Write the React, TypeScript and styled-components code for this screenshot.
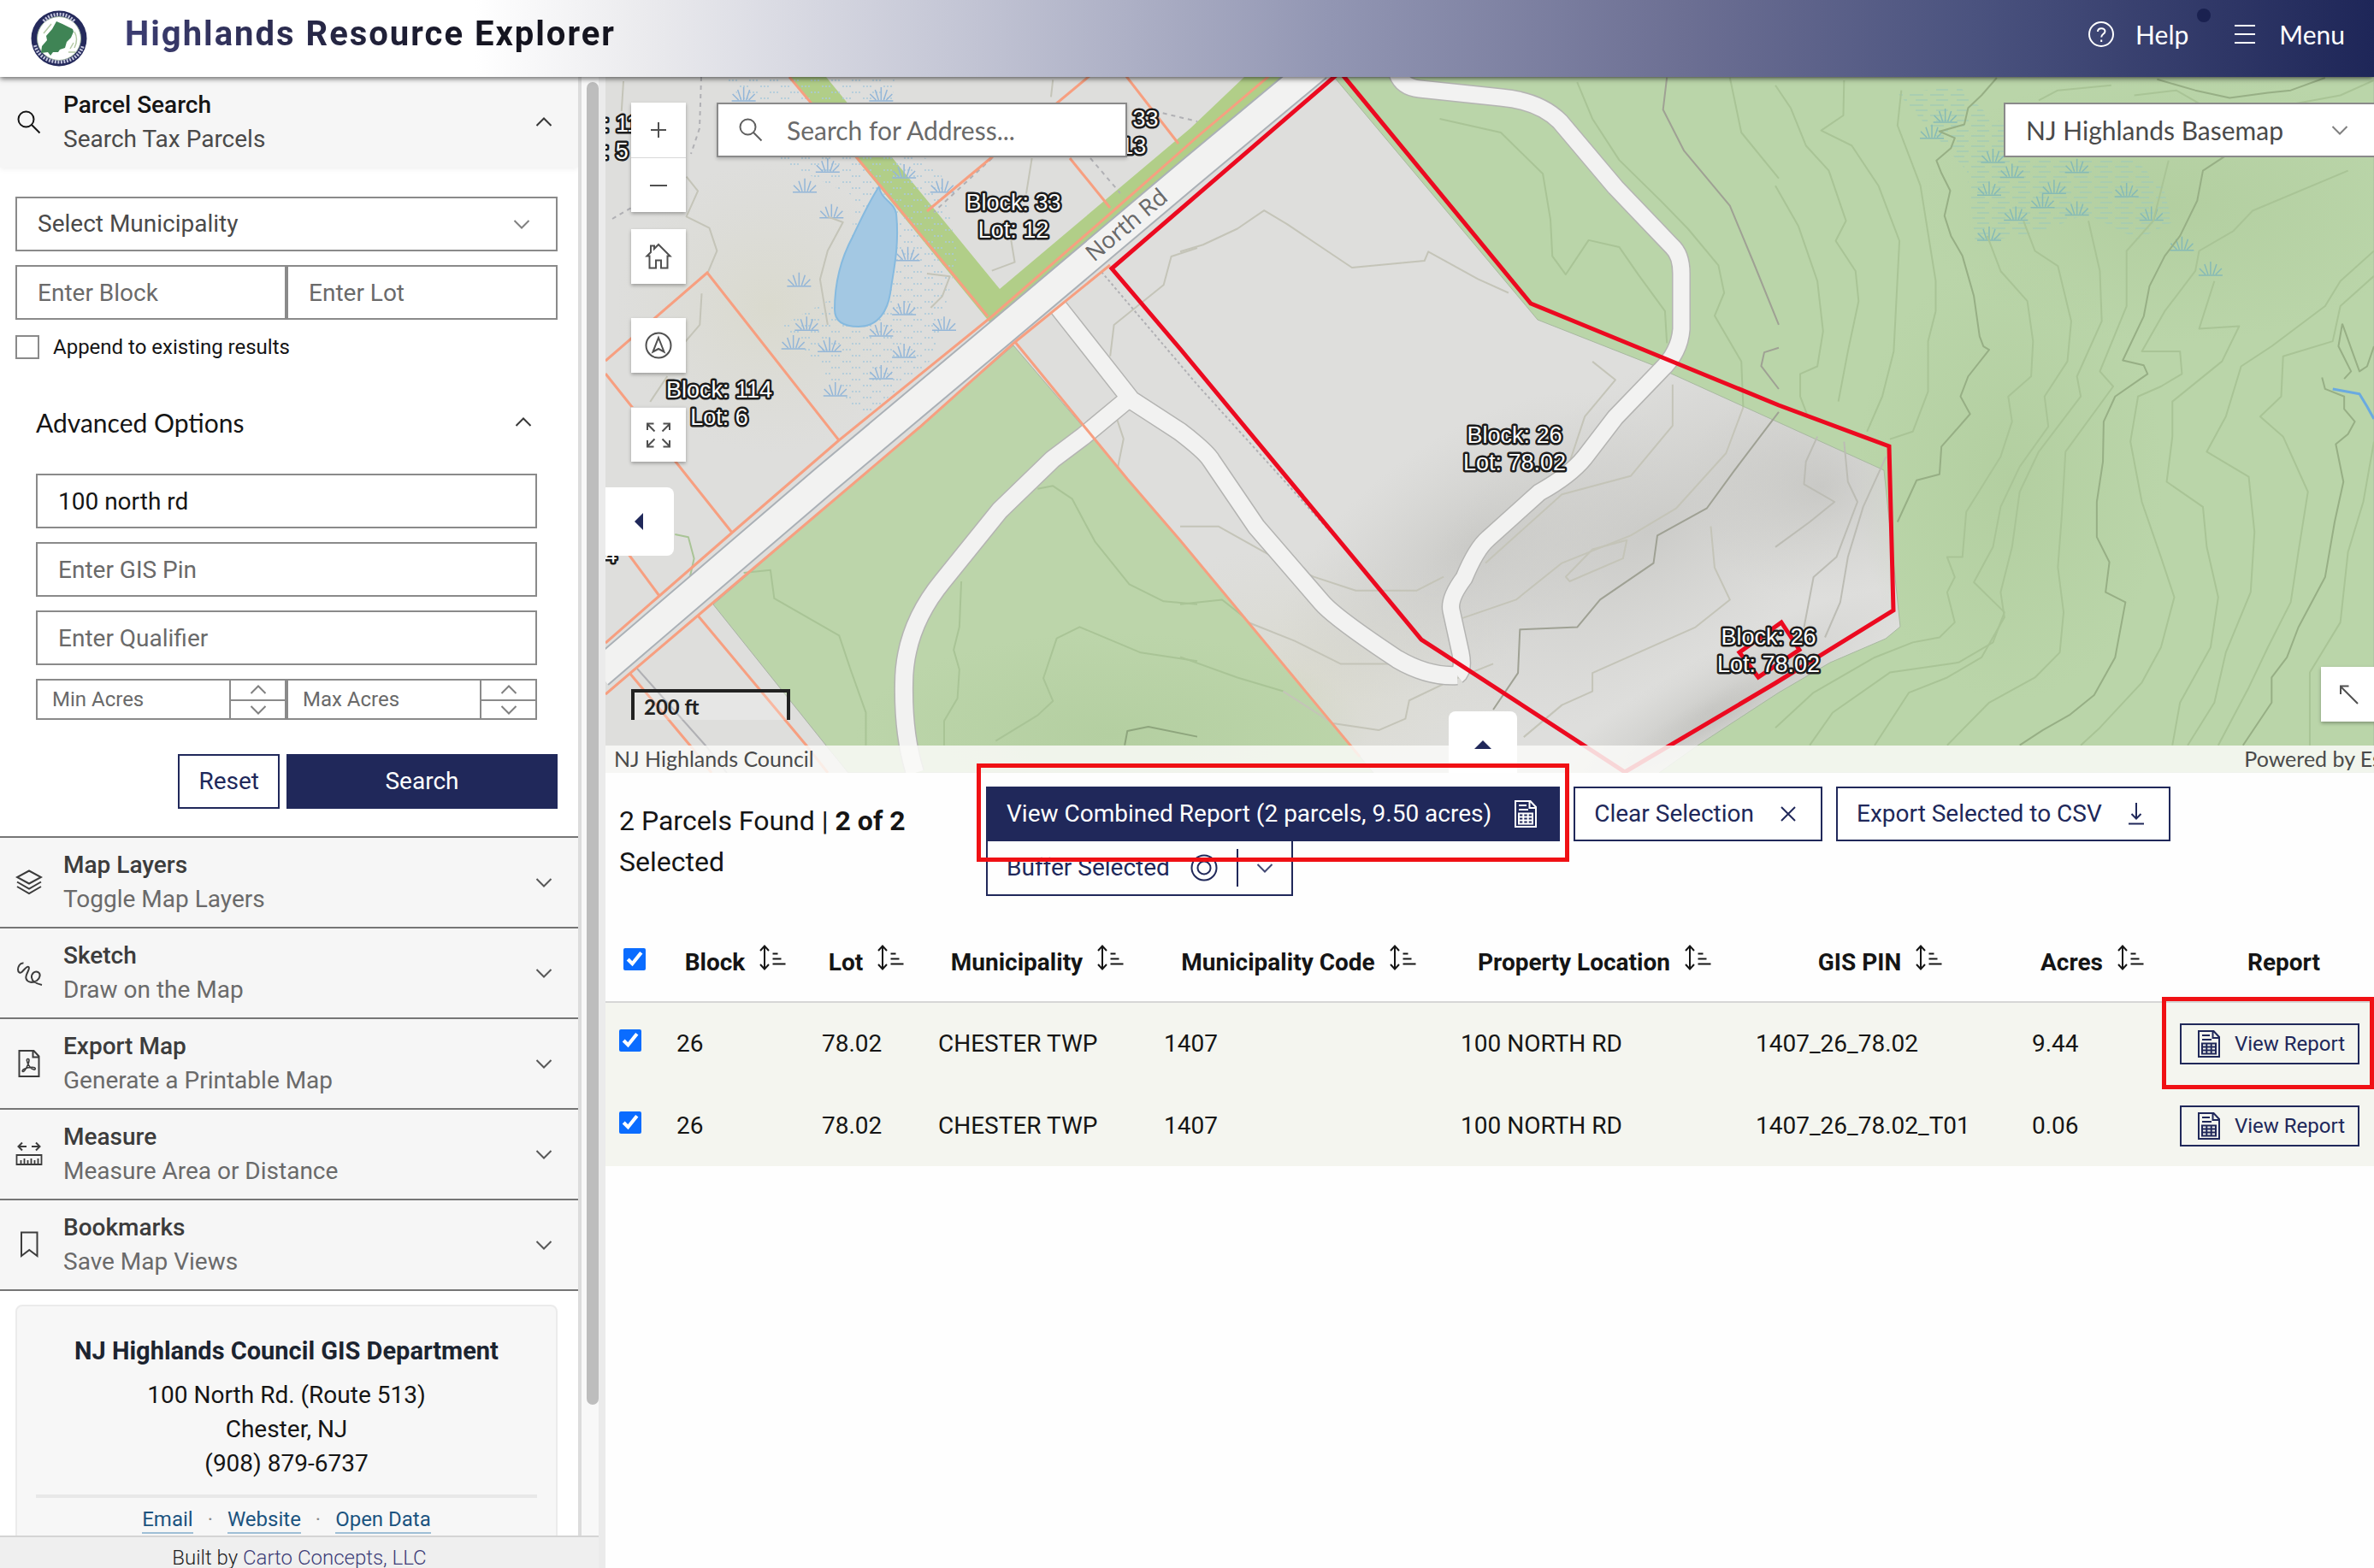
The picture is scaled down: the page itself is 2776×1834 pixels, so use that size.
import React from "react";
import styled, { createGlobalStyle, css } from "styled-components";

const navy = "#20285a";
const line = "#8a8a8a";
const sans = `Roboto, "Liberation Sans", sans-serif`;
const human = `Lato, "Open Sans", sans-serif`;

const Global = createGlobalStyle`
  *, *::before, *::after { box-sizing: border-box; }
  html, body { margin: 0; padding: 0; }
  body { font-family: ${sans}; font-size: 28px; line-height: 40px; color: #151515; background: #fff; }
  button, input, select { font: inherit; color: inherit; margin: 0; }
  button { cursor: pointer; }
`;

const Page = styled.div`
  display: flex;
  flex-direction: column;
  height: 100vh;
  overflow: hidden;
`;

/* ---------- header ---------- */

const Header = styled.header`
  position: relative;
  z-index: 3;
  flex: none;
  display: flex;
  align-items: center;
  justify-content: space-between;
  height: 90px;
  padding: 0 34px 0 36px;
  background: linear-gradient(90deg, #fff 20%, #ebebee 27%, #c5c7d6 40%, #9296b3 56%, #6c6f93 71%, #4b537f 83%, #1e2658 100%);
  box-shadow: 0 2px 6px rgba(0, 0, 0, 0.6);
`;

const Brand = styled.div`
  display: flex;
  align-items: center;
  gap: 44px;
`;

const Title = styled.h1`
  margin: 0;
  padding-bottom: 10px;
  font-size: 40px;
  line-height: 48px;
  font-weight: 700;
  letter-spacing: 2px;
  background: linear-gradient(90deg, #3c3d72, #14141f 75%);
  background-clip: text;
  color: transparent;
`;

const HeaderNav = styled.nav`
  display: flex;
  align-items: center;
  gap: 50px;
  padding-bottom: 10px;
`;

const NavButton = styled.button`
  position: relative;
  display: flex;
  align-items: center;
  gap: 24px;
  padding: 0;
  border: 0;
  background: none;
  color: #fff;
  font-family: ${human};
  font-size: 30px;
`;

const Dot = styled.span`
  position: absolute;
  top: -10px;
  right: -26px;
  width: 16px;
  height: 16px;
  border-radius: 50%;
  background: #1a2150;
`;

/* ---------- frame ---------- */

const Body = styled.div`
  display: flex;
  flex: 1;
  min-height: 0;
`;

const Sidebar = styled.aside`
  flex: none;
  display: flex;
  flex-direction: column;
  width: 708px;
  background: #ececec;
  border-right: 8px solid #ebebeb;
`;

const Scroller = styled.div`
  flex: 1;
  display: flex;
  min-height: 0;
  overflow: hidden;
`;

const ScrollBody = styled.div`
  flex: 1;
  min-width: 0;
  overflow: hidden;
  background: #fff;
  border-right: 4px solid #dcdcdc;
`;

const ScrollTrack = styled.div`
  width: 20px;
  padding: 6px 0 0 6px;
  background: #f8f8f8;
`;

const ScrollThumb = styled.div`
  height: 91%;
  border-radius: 7px;
  background: #bdbdbd;
`;

const Main = styled.main`
  flex: 1;
  min-width: 0;
  display: flex;
  flex-direction: column;
  overflow: hidden;
`;

/* ---------- sidebar ---------- */

const SectionButton = styled.button<{ $open?: boolean }>`
  display: flex;
  align-items: center;
  gap: 24px;
  width: 100%;
  height: 106px;
  padding: 0 30px 0 18px;
  border: 0;
  border-bottom: ${(p) => (p.$open ? "0" : "2px solid #767676")};
  background: #f6f6f6;
  text-align: left;
  color: ${(p) => (p.$open ? "#151515" : "#3c3c3c")};
  ${(p) => p.$open && css`box-shadow: 0 2px 6px rgba(0, 0, 0, 0.06);`}
`;

const SectionText = styled.span`
  flex: 1;
  display: flex;
  flex-direction: column;
`;

const SectionTitle = styled.span`
  font-weight: 500;
`;

const SectionNote = styled.span<{ $open?: boolean }>`
  color: ${(p) => (p.$open ? "#4a4a4a" : "#6a6a6a")};
`;

const SearchForm = styled.form`
  display: flex;
  flex-direction: column;
  gap: 16px;
  padding: 34px 24px 32px 18px;
  border-bottom: 2px solid #767676;
`;

const boxed = css`
  width: 100%;
  min-width: 0;
  height: 64px;
  border: 2px solid ${line};
  border-radius: 0;
  background: #fff;
  padding: 0 24px;
  outline: none;
  &::placeholder {
    color: #6a6a6a;
    opacity: 1;
  }
`;

const TextBox = styled.input`
  ${boxed}
`;

const SelectWrap = styled.span`
  position: relative;
  display: block;
`;

const SelectBox = styled.select`
  ${boxed}
  appearance: none;
  color: #4a4a4a;
`;

const SelectMark = styled.span`
  position: absolute;
  top: 0;
  bottom: 0;
  right: 32px;
  display: flex;
  align-items: center;
  pointer-events: none;
  color: #6a6a6a;
`;

const Pair = styled.div`
  display: grid;
  grid-template-columns: 1fr 1fr;
`;

const AppendLabel = styled.label`
  display: flex;
  align-items: center;
  gap: 16px;
  padding-top: 2px;
  line-height: 28px;
  font-size: 24px;
`;

const AppendBox = styled.input`
  appearance: none;
  width: 28px;
  height: 28px;
  border: 2px solid ${line};
  background: #fff;
`;

const AdvancedToggle = styled.button`
  display: flex;
  align-items: center;
  justify-content: space-between;
  height: 48px;
  margin: 34px 0 20px;
  padding: 0 6px 0 0;
  border: 0;
  background: none;
  font-family: ${human};
  font-size: 30px;
`;

const Advanced = styled.div`
  display: flex;
  flex-direction: column;
  gap: 16px;
  padding: 0 24px;
`;

const Stepper = styled.div`
  display: grid;
  grid-template-columns: 1fr 67px;
  height: 48px;
`;

const StepInput = styled.input`
  ${boxed}
  height: 48px;
  padding: 0 17px;
  font-size: 24px;
  border-right: 0;
  appearance: textfield;
  &::-webkit-inner-spin-button {
    display: none;
  }
`;

const StepButtons = styled.div`
  display: grid;
  grid-template-rows: 1fr 1fr;
  border: 2px solid ${line};
`;

const StepButton = styled.button`
  display: flex;
  align-items: center;
  justify-content: center;
  padding: 0;
  border: 0;
  background: #fff;
  color: #6a6a6a;
  & + & {
    border-top: 2px solid ${line};
  }
`;

const FormActions = styled.div`
  display: flex;
  justify-content: flex-end;
  gap: 8px;
  padding-top: 24px;
`;

const Button = styled.button<{ $solid?: boolean }>`
  display: flex;
  align-items: center;
  justify-content: center;
  gap: 24px;
  height: 64px;
  padding: 0 22px;
  border: 2px solid ${navy};
  background: ${(p) => (p.$solid ? navy : "#fff")};
  color: ${(p) => (p.$solid ? "#fff" : navy)};
  white-space: nowrap;
`;

const SubmitButton = styled(Button)`
  flex: 0 0 50%;
`;

const ContactCard = styled.section`
  margin: 16px 24px 0 18px;
  padding: 32px 22px 60px;
  border: 2px solid #ebebeb;
  border-radius: 8px;
  background: #f7f7f7;
  text-align: center;
`;

const ContactTitle = styled.h2`
  margin: 0 0 12px;
  font-size: 29px;
  line-height: 40px;
  font-weight: 700;
  color: #1c2430;
`;

const Address = styled.address`
  font-style: normal;
  padding-bottom: 16px;
  border-bottom: 4px solid #e8e8e8;
`;

const ContactLinks = styled.div`
  display: flex;
  justify-content: center;
  gap: 17px;
  padding-top: 10px;
  font-size: 24px;
  line-height: 30px;
  color: #8a8a8a;
`;

const ContactLink = styled.a`
  color: #1c5480;
  text-decoration: none;
  border-bottom: 2px solid #9fbfd6;
`;

const Credit = styled.footer`
  flex: none;
  height: 38px;
  padding-top: 8px;
  border-top: 2px solid #d4d4d4;
  background: #efefef;
  text-align: center;
  font-size: 24px;
  line-height: 32px;
  font-weight: 300;
  color: #222;
  a {
    color: #3d3d78;
    text-decoration: none;
  }
`;

/* ---------- map ---------- */

const MapPane = styled.section`
  position: relative;
  flex: none;
  height: calc(50vh - 103px);
  overflow: hidden;
  background: #dededc;
`;

const MapDrawing = styled.svg`
  display: block;
  width: 100%;
  height: 100%;
`;

const ToolColumn = styled.div`
  position: absolute;
  top: 30px;
  left: 30px;
  display: flex;
  flex-direction: column;
  gap: 40px;
`;

const ToolGroup = styled.div`
  display: flex;
  flex-direction: column;
  gap: 20px;
`;

const ToolStack = styled.div`
  display: flex;
  flex-direction: column;
  box-shadow: 0 2px 4px rgba(0, 0, 0, 0.3);
`;

const ToolButton = styled.button`
  display: flex;
  align-items: center;
  justify-content: center;
  width: 64px;
  height: 64px;
  padding: 0;
  border: 0;
  background: #fff;
  color: #505050;
  box-shadow: 0 2px 4px rgba(0, 0, 0, 0.3);
  ${ToolStack} & {
    box-shadow: none;
  }
  & + & {
    border-top: 1px solid #d8d8d8;
  }
`;

const AddressSearch = styled.label`
  position: absolute;
  top: 30px;
  left: 130px;
  display: flex;
  align-items: center;
  gap: 26px;
  width: 480px;
  height: 64px;
  padding: 0 20px 0 22px;
  border: 2px solid ${line};
  background: #fff;
  color: #5f5f5f;
  box-shadow: 0 2px 4px rgba(0, 0, 0, 0.2);
`;

const AddressInput = styled.input`
  flex: 1;
  min-width: 0;
  padding: 0;
  border: 0;
  outline: none;
  background: none;
  font-family: ${human};
  font-size: 30px;
  &::placeholder {
    color: #6a6a6a;
    opacity: 1;
  }
`;

const BasemapPicker = styled.div`
  position: absolute;
  top: 30px;
  right: -30px;
  width: 463px;
`;

const BasemapSelect = styled(SelectBox)`
  font-family: ${human};
  font-size: 30px;
`;

const BasemapMark = styled(SelectMark)`
  right: 60px;
`;

const CornerButton = styled(ToolButton)`
  position: absolute;
  right: -2px;
  bottom: 60px;
`;

const ScaleBar = styled.div`
  position: absolute;
  left: 30px;
  bottom: 62px;
  width: 186px;
  height: 36px;
  padding-left: 11px;
  border: 4px solid #222;
  border-bottom: 0;
  background: rgba(255, 255, 255, 0.25);
  font-family: ${human};
  font-size: 24px;
  line-height: 34px;
  font-weight: 700;
  color: #222;
`;

const Attribution = styled.div`
  position: absolute;
  left: 0;
  right: 0;
  bottom: 0;
  display: flex;
  justify-content: space-between;
  height: 32px;
  padding: 0 0 0 10px;
  background: rgba(250, 250, 248, 0.85);
  font-family: ${human};
  font-size: 25px;
  line-height: 30px;
  color: #4a4a4a;
  white-space: nowrap;
`;

const Powered = styled.span`
  margin-right: -24px;
`;

const SideFold = styled.button`
  position: absolute;
  top: 480px;
  left: 0;
  display: flex;
  align-items: center;
  justify-content: center;
  width: 80px;
  height: 80px;
  padding: 0 2px 0 0;
  border: 0;
  border-radius: 0 8px 8px 0;
  background: #fff;
`;

const BottomFold = styled(SideFold)`
  top: auto;
  bottom: 0;
  left: 986px;
  height: 72px;
  padding: 6px 0 0;
  border-radius: 8px 8px 0 0;
`;

/* ---------- results ---------- */

const Results = styled.section`
  flex: 1;
  min-height: 0;
  background: #fefefe;
`;

const ResultsBar = styled.div`
  display: flex;
  align-items: flex-start;
  height: 174px;
  padding: 16px 16px 0;
`;

const Count = styled.p`
  flex: none;
  width: 400px;
  margin: 16px 29px 0 0;
  font-size: 32px;
  line-height: 48px;
  strong {
    font-weight: 700;
  }
`;

const Actions = styled.div`
  display: flex;
  flex-wrap: wrap;
  column-gap: 16px;
`;

const Marked = styled.div`
  position: relative;
  display: flex;
  width: max-content;
`;

const Mark = styled.span<{ $kind: "wide" | "cell" }>`
  position: absolute;
  z-index: 1;
  inset: ${(p) => (p.$kind === "wide" ? "-27px -11px -24px" : "-31px -17px -29px -21px")};
  border: 5px solid #f01014;
  pointer-events: none;
`;

const SplitButton = styled.div`
  display: flex;
  align-items: center;
  height: 64px;
  border: 2px solid ${navy};
  border-top-width: 0;
  color: ${navy};
`;

const SplitMain = styled.button`
  display: flex;
  align-items: center;
  gap: 24px;
  height: 44px;
  padding: 0 22px;
  border: 0;
  border-right: 2px solid ${navy};
  background: none;
`;

const SplitMore = styled.button`
  display: flex;
  align-items: center;
  justify-content: center;
  width: 62px;
  height: 44px;
  padding: 0;
  border: 0;
  background: none;
`;

const Table = styled.table`
  width: calc(100% + 32px);
  min-width: 2100px;
  table-layout: fixed;
  border-collapse: collapse;
`;

const Column = styled.col<{ $w?: number }>`
  width: ${(p) => (p.$w ? `${p.$w}px` : "auto")};
`;

const HeadCell = styled.th`
  height: 94px;
  padding: 3px 16px 0;
  border-bottom: 2px solid #d6d6d6;
  font-weight: 700;
  white-space: nowrap;
  color: #151515;
`;

const HeadInner = styled.span`
  display: inline-flex;
  align-items: center;
  gap: 16px;
`;

const SortButton = styled.button`
  display: inline-flex;
  padding: 0 0 12px;
  border: 0;
  background: none;
`;

const Row = styled.tr`
  background: #f4f5ef;
`;

const Cell = styled.td`
  height: 96px;
  padding: 1px 16px 0;
  white-space: nowrap;
`;

const TickBox = styled.input`
  display: block;
  width: 26px;
  height: 26px;
  margin: 0 auto 8px;
  accent-color: #0a6cff;
  ${Cell} & {
    margin: 0 0 8px;
  }
`;

const ReportButton = styled(Button)`
  height: 48px;
  padding: 0 15px 0 16px;
  gap: 14px;
  background: transparent;
  font-size: 24px;
`;

/* ---------- icons ---------- */

type IconProps = { children: React.ReactNode };
const Icon = ({ children }: IconProps) => (
  <svg width="32" height="32" viewBox="0 0 32 32" fill="none" stroke="currentColor" strokeWidth="2" aria-hidden="true">
    {children}
  </svg>
);

const Chevron = ({ up }: { up?: boolean }) => (
  <svg width="20" height="12" viewBox="0 0 20 12" fill="none" stroke="currentColor" strokeWidth="2" strokeOpacity="0.85" aria-hidden="true">
    <path d={up ? "M1.500 10 10 1.500 18.500 10" : "M1.500 2 10 10.500 18.500 2"} />
  </svg>
);

const SearchIcon = () => (
  <Icon>
    <circle cx="12.500" cy="12.500" r="9" />
    <path d="m18.800 18.800 9.700 9.700" />
  </Icon>
);

const LayersIcon = () => (
  <Icon>
    <path d="M16 2.500 30 10l-14 7.500L2 10z" />
    <path d="m2 15.500 14 8 14-8M2 21l14 8 14-8" />
  </Icon>
);

const SketchIcon = () => (
  <Icon>
    <path d="M9.500 4.500C5 4 3 9 3 12c0 3 2.500 5 5 2.500 3-3 5.500-7 7.500-5.500 2.500 2-4.500 9-3 13.500 1.500 5 8 5.500 12.500 2.500 4-3 5-8 1.500-10-4-2-8 2-7.500 6.500C19.500 26 24 28.500 31 30" />
  </Icon>
);

const PdfIcon = () => (
  <Icon>
    <path d="M4.500 1h17l6 6.500V31h-23zM20.500 1.500v7h7" />
    <path d="M14.500 10.500c2-.500 2 2.500 0 7-1.500 3.500-3.500 7.500-5.500 8-1.500 0-1-2 1.500-3.200 2.500-1.300 6-2 9-2 2.500 0 4 .700 3.800 2-.500 1.500-3.800.700-6.300-2.300-2-2.500-3.500-6-3.700-8 0-.800.500-1.300 1.200-1.500z" strokeWidth="1.600" />
  </Icon>
);

const MeasureIcon = () => (
  <Icon>
    <path d="M4 7h9M19 7h9M8 2.500 3.500 7 8 11.500M24 2.500 28.500 7 24 11.500" />
    <path d="M1.500 17h29v11h-29zM6.500 28v-5M10.500 28v-7M14.500 28v-5M18.500 28v-7M22.500 28v-5M26.500 28v-7" strokeWidth="1.800" />
  </Icon>
);

const BookmarkIcon = () => (
  <Icon>
    <path d="M7 1.500h18.500v27.500L16.250 22 7 29z" />
  </Icon>
);

const SheetIcon = () => (
  <Icon>
    <path d="M4 1h17.500L28 8v23H4zM20.500 1.500V9H28M8 6h9M8 11h11" />
    <path d="M8 15.500h16v12H8zM8 19.500h16M8 23.500h16M13.300 15.500v12M18.700 15.500v12" />
  </Icon>
);

const SortIcon = () => (
  <Icon>
    <path d="M7 3v26M2 8l5-5.500L12 8M2 24l5 5.500L12 24M16.500 11.500h6M16.500 17.500h10M16.500 23.500h15" />
  </Icon>
);

const CloseIcon = () => (
  <Icon>
    <path d="m8 8 16 16M24 8 8 24" />
  </Icon>
);

const DownloadIcon = () => (
  <Icon>
    <path d="M16 3v18M10.500 16l5.500 5.500 5.500-5.500M7 27.500h18" />
  </Icon>
);

const BufferIcon = () => (
  <Icon>
    <circle cx="16" cy="16" r="14.500" />
    <circle cx="16" cy="16" r="7.500" />
  </Icon>
);

const HelpIcon = () => (
  <Icon>
    <circle cx="16" cy="16" r="14" />
    <path d="M12 13c0-5 8.500-5 8.500-.500 0 3.500-4.300 3-4.300 7M16.200 22.500v2.500" />
  </Icon>
);

const MenuIcon = () => (
  <Icon>
    <path d="M4 6h24M4 16h24M4 26h24" />
  </Icon>
);

const HomeIcon = () => (
  <Icon>
    <path d="M2.500 15.500 7 11V3.500h4v3.500l5-5 13.500 13.500h-3V29.500H19v-9h-6v9H5.500v-14z" />
  </Icon>
);

const CompassIcon = () => (
  <Icon>
    <circle cx="16" cy="16" r="14.500" />
    <path d="m16 7 6.500 16.500L16 20l-6.500 3.500z" />
  </Icon>
);

const ExpandIcon = () => (
  <Icon>
    <path d="M11.500 11.500 3 3M3 10V2.500h7.500M20.500 11.500 29 3M29 10V2.500h-7.500M11.500 20.500 3 29M3 22v7.500h7.500M20.500 20.500 29 29M29 22v7.500h-7.500" />
  </Icon>
);

const ArrowIcon = () => (
  <Icon>
    <path d="M27 27 7 7M7 16V6.500h9.500" />
  </Icon>
);

const Seal = () => (
  <svg width="66" height="66" viewBox="0 0 66 66" aria-hidden="true">
    <circle cx="33" cy="33" r="32.500" fill="#252a5c" />
    <circle cx="33" cy="33" r="25.500" fill="#fff" stroke="#9fb59f" strokeWidth="1" />
    <path d="M30 13l7 3 12 6 1 3-3 7-5 5-2 7-6 2-2 3-6 0-3 4-3-4-8 1 1-8 6-7-1-5 7-8z" fill="#3f8455" />
    <path d="M15 27l9-11M51 25c4 7 3 13 0 19M44 49h8M46 45l4-7" fill="none" stroke="#b4c9a4" strokeWidth="1.500" />
    <path d="M15 16c9-11 27-11 36 0" fill="none" stroke="#c3c5dc" strokeWidth="4" strokeDasharray="2 1.500" transform="translate(0 -3)" />
    <path d="M5 41c7 26 49 26 56 0" fill="none" stroke="#c3c5dc" strokeWidth="4" strokeDasharray="2 1.500" />
  </svg>
);

/* ---------- map drawing ---------- */

const orange = [
  "M708 752 771 697 856 623 981 515 1160 370 1298 250 1400 160 1485 88",
  "M708 812 816 720 1075 500 1187 400 1298 310",
  "M1187 400 1318 560 1380 632 1590 885",
  "M923 90 1030 218 1155 370",
  "M708 422 827 319 981 515",
  "M708 437 790 540 856 623",
  "M720 628 771 697",
  "M1275 88 1084 247",
  "M1316 88 1378 168",
  "M1251 185 1298 243",
  "M816 720 943 872 968 904",
  "M736 787 807 872 832 904",
];

const parcel = "M1567 84 1790 355 2080 474 2209 522 2214 714 2076 799 1900 903 1662 748 1380 408 1300 314z";

const roads = [
  { w: 20, d: "M1238 360 1323 468 1380 505Q1410 528 1416 538L1469 616 1545 704Q1560 722 1634 771 1670 792 1704 790" },
  { w: 20, d: "M1320 466 1267 510 1231 537 1169 597 1102 680Q1057 735 1057 800 1056 860 1070 904" },
  { w: 19, d: "M1634 86Q1640 102 1660 104L1755 114Q1800 118 1824 142L1889 219 1955 288Q1966 298 1966 320L1966 385Q1964 412 1942 433L1889 488 1853 535Q1836 556 1800 576L1740 630Q1726 642 1712 676 1694 700 1697 714L1708 764Q1712 784 1704 790" },
];

const thinEast = [
  "M0 170 40 215 80 290 140 340 185 440 158 480 210 540 218 600 190 700 165 800",
  "M180 160 178 230 120 260 200 290 270 370 325 480 310 700 280 790 240 860",
  "M330 180 320 250 380 370 420 560 420 620 400 680 400 780 360 860 300 875",
  "M0 370 60 450 110 560 125 660 110 730 65 745 65 790 85 830",
  "M555 470 590 540 660 600 675 680 670 750 610 790 620 840 590 910 500 1020 490 1110 450 1110 470 1150 450 1180 470 1240 430 1270 360 1280 260 1310 100 1380 0 1450",
  "M650 440 680 500 740 530 775 640 765 720 705 790 715 850 640 930 590 1010 570 1090 520 1160 600 1220 570 1280 480 1320 300 1340 150 1420 90 1485",
  "M820 440 850 540 855 640 790 750 800 790 690 900 640 980 620 1090 590 1180 600 1230 540 1310 450 1350 350 1380 260 1485",
  "M1030 320 990 440 920 500 920 610 850 740 885 770 760 900 750 1030 740 1130 755 1220 745 1300 680 1350 560 1400 450 1485",
  "M1500 340 1250 420 1200 460 1110 500 1100 540 1020 620 960 700 1060 700 1065 745 1010 770 950 790 930 880 960 1000 1010 1110 1045 1190 1010 1290 960 1360 850 1450 800 1485",
  "M1150 560 1110 655 1215 650 1170 720 1040 800 1040 870 1025 960 1120 1010 1130 1090 1160 1190 1140 1290 1060 1400 1040 1485",
  "M1568 500 1480 560 1440 610 1300 690 1220 730 1180 830 1130 900 1240 950 1255 1060 1245 1180 1180 1300 1150 1400 1080 1485",
  "M1568 550 1480 610 1460 680 1330 710 1325 790 1270 830 1330 870 1395 980 1370 1100 1350 1200 1290 1290 1240 1370 1160 1485",
  "M1568 880 1540 1000 1500 1100 1480 1240 1400 1340 1400 1485",
  "M690 200 740 180 880 170M940 190 1050 180 1130 215 1300 215 1480 190 1568 160",
];
const thinParcel = [
  "M0 1090 90 1040 155 1000 75 965 80 920 110 870M180 880 190 960 215 1000 160 1110 100 1150 75 1250M290 910 230 1010 190 1110 170 1200 130 1270",
];
const thickEast = [
  "M580 155 540 190 505 215 495 248 430 262 470 275 460 295 422 320 435 345 458 380 443 430 460 470 490 510 520 590 535 670 545 690 560 697 505 750 485 790 510 825 435 890 430 945 370 957 320 1040",
  "M1200 300 1120 340 1105 400 1060 470 1020 510 980 570 965 630 910 718 965 728 975 745 890 790 860 840 858 920 842 1000 842 1070 875 1120 865 1180 917 1200 890 1310 835 1385 770 1425 700 1455 640 1485",
  "M1000 158 1100 180 1190 195 1290 185 1350 180 1440 155",
  "M1485 645 1475 690 1508 740 1490 755 M1485 645 1530 740 1550 730 1568 690 M1432 752 1440 775 1490 790 1490 815 1518 840 1500 865 1468 885 1488 960 1465 1040 1440 1150 1370 1250 1340 1310 1300 1350 1300 1400 1225 1485",
];
const thinMid = [
  "M1290 690 1290 780 1180 890 1000 930 800 1080",
  "M0 400 60 385 150 350 220 310 280 340 450 435 640 420 650 400 780 460 860 490",
  "M1080 640 1140 680 1060 760 1020 860",
  "M1475 740 1430 840 1300 960 1180 1020 1000 1080 880 1160 740 1200",
  "M0 1000 100 1000 250 1070 350 1110 460 1140 620 1140 690 1110",
  "M180 1210 300 1250 420 1300 560 1300",
  "M270 1360 400 1430 520 1445 590 1420 600 1380 700 1340 820 1300",
  "M1390 1000 1400 1090 1440 1160 1350 1220 1080 1320 1080 1360 1000 1390 900 1460",
  "M1010 1110 1080 1050 1170 1030 1160 1070 1020 1120z",
];
const thinMidGreen = [
  "M1040 30 1080 110 1150 200 1260 290 1330 350 1410 430 1425 490 1400 540 1470 640 1475 740",
  "M680 110 840 140 950 230 970 330 975 410 1010 450 1070 375 1150 390 1200 450 1270 530 1275 600",
  "M1440 20 1470 140 1568 240",
  "M0 1285 150 1330 270 1360",
  "M0 1170 110 1160 170 1200",
];
const thickMid = [
  "M1275 20 1265 90 1320 180 1440 300 1500 420 1568 560",
  "M1568 750 1450 880 1380 960 1250 1020 1240 1080 1100 1160 1040 1220 890 1225 885 1320 820 1400",
  "M1568 610 1530 620 1522 650 1568 700",
];
const thinWest = [
  "M1150 215 1190 205 1240 250 1300 400 1390 550 1480 610 1568 620",
  "M380 510 450 500 460 600 630 730 660 850 700 1000 700 1115",
  "M950 540 945 700 930 780 945 850 940 950 905 1030 905 1115",
  "M1568 820 1420 790 1260 700 1200 740 1165 880 1190 960 1150 1010 1040 1100",
  "M200 375 235 385 250 460 240 520",
];
const thinNorthWest = [
  "M230 380 260 430 230 520 290 560 310 640 285 720 M270 790 265 900 220 970 M180 1080 135 1170",
  "M65 45 60 150M600 520 640 540 600 640 580 740 600 900M1190 40 1185 100M1135 315 1120 440M1080 600 1090 680 1030 710",
  "M860 720 920 730 900 800 870 840M1568 630 1500 660 1480 760 1350 900 1340 1010M1350 1200 1375 1300 1360 1400",
];

const tuftsWest = [[380, 90], [740, 90], [600, 340], [540, 410], [610, 500], [800, 360], [900, 410], [810, 650], [525, 740], [800, 840], [545, 895], [605, 970], [740, 915], [905, 895], [800, 990], [740, 1065], [620, 1125], [510, 960]];
const tuftsEast = [[445, 230], [410, 262], [570, 310], [620, 340], [730, 372], [560, 375], [790, 330], [920, 378], [630, 425], [700, 400], [790, 415], [985, 425], [560, 465], [1065, 485], [1140, 535]];

const labels = [
  { x: 1185, y: 246, a: "Block: 33", b: "Lot: 12" },
  { x: 1299, y: 148, a: "Block: 33", b: "Lot: 13" },
  { x: 841, y: 465, a: "Block: 114", b: "Lot: 6" },
  { x: 1771, y: 518, a: "Block: 26", b: "Lot: 78.02" },
  { x: 2068, y: 754, a: "Block: 26", b: "Lot: 78.02" },
  { x: 701, y: 154, a: "Block: 114", b: "Lot: 5" },
];

const Strokes = ({ list, w }: { list: string[]; w: number }) => (
  <>
    {list.map((d) => (
      <path key={d} d={d} strokeWidth={w} vectorEffect="non-scaling-stroke" />
    ))}
  </>
);

const Tuft = ({ x, y }: { x: number; y: number }) => (
  <path d={`M${x} ${y + 7}v-15M${x - 3} ${y + 7}l-4-12M${x + 3} ${y + 7}l4-12M${x - 6} ${y + 7}l-7-7M${x + 6} ${y + 7}l7-7M${x - 14} ${y + 8}h28`} />
);

const MapArt = () => (
  <MapDrawing viewBox="708 90 2068 814" preserveAspectRatio="xMinYMin slice" role="img" aria-label="Parcel map">
    <defs>
      <pattern id="marsh" width="24" height="14" patternUnits="userSpaceOnUse">
        <path d="M1 3h12M12 10h10" stroke="#a9c9dc" strokeWidth="1.500" strokeDasharray="2 2" />
      </pattern>
      <pattern id="marshEast" width="24" height="12" patternUnits="userSpaceOnUse">
        <path d="M1 3h16M8 9h14" stroke="#a3cbb4" strokeWidth="1.500" />
      </pattern>
      <radialGradient id="shade">
        <stop offset="0" stopColor="#b8b8b4" stopOpacity="0.5" />
        <stop offset="1" stopColor="#c4c4c0" stopOpacity="0" />
      </radialGradient>
      <radialGradient id="warm">
        <stop offset="0" stopColor="#d9d9cb" stopOpacity="0.8" />
        <stop offset="1" stopColor="#d9d9d0" stopOpacity="0" />
      </radialGradient>
      <radialGradient id="dusk">
        <stop offset="0" stopColor="#acc998" stopOpacity="0.5" />
        <stop offset="1" stopColor="#acc998" stopOpacity="0" />
      </radialGradient>
    </defs>
    <rect x="708" y="90" width="2068" height="814" fill="#dededc" />
    <ellipse cx="900" cy="360" rx="180" ry="170" fill="url(#warm)" />
    <ellipse cx="1520" cy="800" rx="260" ry="160" fill="url(#warm)" />
    <ellipse cx="1720" cy="640" rx="260" ry="130" fill="url(#shade)" transform="rotate(-35 1720 640)" />
    <ellipse cx="1930" cy="620" rx="340" ry="170" fill="url(#shade)" transform="rotate(-35 1930 620)" />
    <ellipse cx="2130" cy="570" rx="160" ry="130" fill="url(#shade)" />
    <ellipse cx="2000" cy="830" rx="260" ry="60" fill="url(#shade)" transform="rotate(-30 2000 830)" />
    <ellipse cx="2010" cy="840" rx="180" ry="30" fill="url(#shade)" transform="rotate(-30 2010 840)" />

    <path d="M1560 90 1788 362 1798 374 1930 426 2203 550 2222 733 2205 747 2140 775 2080 810 1985 872 1940 904H2776V90z" fill="#bad5a9" stroke="#a8b8a0" />
    <path d="M1185 404 834 707 966 872 992 904H1606L1380 632z" fill="#bcd5aa" stroke="#a8b0a4" />
    <ellipse cx="2540" cy="240" rx="300" ry="160" fill="url(#dusk)" />
    <ellipse cx="2350" cy="560" rx="180" ry="260" fill="url(#dusk)" />
    <ellipse cx="1300" cy="860" rx="300" ry="120" fill="url(#dusk)" />
    <path d="M923 90H966L1169 338 1392 150 1455 90H1502L1380 190 1163 384z" fill="#b1ce88" />

    <path d="M850 92H1046L1040 150 1100 200 1120 300 1090 420 1010 490 950 420 915 380 990 340 1000 230 915 190z" fill="url(#marsh)" />
    <path d="M2220 110 2290 100 2330 140 2480 170 2530 220 2540 260 2500 280 2440 250 2390 270 2310 285 2300 200z" fill="url(#marshEast)" />
    <g fill="none" stroke="#93b6d8" strokeWidth="1.500">
      {tuftsWest.map(([x, y]) => (
        <Tuft key={`${x}-${y}`} x={700 + x * 0.4464} y={80 + y / 3} />
      ))}
    </g>
    <g fill="none" stroke="#86bab6" strokeWidth="1.500">
      {tuftsEast.map(([x, y]) => (
        <Tuft key={`${x}-${y}`} x={2076 + x * 0.4464} y={y * 0.587} />
      ))}
    </g>
    <path d="M1028 218C1030 234 1046 236 1048 250 1052 290 1044 320 1041 343 1038 362 1028 382 1004 382 984 382 976 374 976 362 976 320 990 290 997 277 1006 258 1016 236 1028 218z" fill="#a3c8e3" stroke="#86badf" strokeWidth="2" />

    <g fill="none" strokeLinejoin="round" stroke="#a9c496">
      <g transform="translate(2076 0) scale(0.4464 0.587)">
        <Strokes list={thinEast} w={2} />
        <g stroke="#bcbcb4"><Strokes list={thinParcel} w={2} /></g>
        <g stroke="#97af85"><Strokes list={thickEast} w={2} /></g>
        <path d="M1460 775 1530 785 1550 810 1568 835" stroke="#6aaae0" strokeWidth="3" vectorEffect="non-scaling-stroke" />
      </g>
      <g transform="translate(700 500) scale(0.4464 0.3333)">
        <Strokes list={thinWest} w={2} />
        <path d="M1378 1115 1385 1065 1440 1050 1568 1085" stroke="#8ea57d" strokeWidth="2" vectorEffect="non-scaling-stroke" />
      </g>
      <g transform="translate(1380 80) scale(0.4464 0.5357)">
        <Strokes list={thinMidGreen} w={2} />
      </g>
    </g>
    <g fill="none" strokeLinejoin="round" stroke="#c4c4b8">
      <g transform="translate(1380 80) scale(0.4464 0.5357)">
        <Strokes list={thinMid} w={2} />
        <g stroke="#9fa194"><Strokes list={thickMid} w={2} /></g>
      </g>
      <g transform="translate(700 80) scale(0.4464 0.3333)">
        <Strokes list={thinNorthWest} w={2} />
      </g>
    </g>
    <g fill="none" stroke="#b0b0b4" strokeWidth="2" strokeDasharray="5 5">
      <path d="M820 90 818 150 808 180M716 256 760 230M1160 185 1092 248M1275 185 1310 226M1350 130 1400 142" />
      <path d="M1288 318 1400 450 1590 660" strokeDasharray="3 3" />
      <path d="M745 782 825 872 850 904" strokeDasharray="none" />
    </g>

    <g fill="none" stroke="#b4b4b2">
      {roads.map((r) => (
        <path key={r.d} d={r.d} strokeWidth={r.w + 3} />
      ))}
      <path d="M700 788 966 560 1172 387 1390 203 1540 78" strokeWidth="36" stroke="#aab0b6" />
    </g>
    <g fill="none" stroke="#f2f2f1" strokeLinejoin="round">
      {roads.map((r) => (
        <path key={r.d} d={r.d} strokeWidth={r.w} />
      ))}
      <path d="M700 788 966 560 1172 387 1390 203 1540 78" strokeWidth="32" />
    </g>
    <g fill="none" stroke="#f79f80" strokeWidth="3">
      {orange.map((d) => (
        <path key={d} d={d} />
      ))}
    </g>
    <text x="1318" y="272" transform="rotate(-40 1318 264)" textAnchor="middle" fontFamily="'Noto Sans', sans-serif" fontSize="27" fill="#6a6a6a" stroke="#f4f4f4" strokeWidth="4" paintOrder="stroke">North Rd</text>
    <path d={parcel} fill="none" stroke="#ec0a20" strokeWidth="5" />
    <path d="M2034 763 2083 728 2104 760 2056 792z" fill="none" stroke="#ec0a20" strokeWidth="5" />
    <g fontFamily="'Liberation Sans', Arial, sans-serif" fontSize="27" fill="#fff" stroke="#1c1c1c" strokeWidth="5" strokeLinejoin="round" paintOrder="stroke" textAnchor="middle">
      {labels.map((l) => (
        <text key={`${l.x}-${l.y}`} x={l.x} y={l.y}>
          {l.a}
          <tspan x={l.x} dy="32">{l.b}</tspan>
        </text>
      ))}
      <text x="714" y="658">4</text>
    </g>
  </MapDrawing>
);

/* ---------- data ---------- */

const sections = [
  { title: "Map Layers", note: "Toggle Map Layers", icon: <LayersIcon /> },
  { title: "Sketch", note: "Draw on the Map", icon: <SketchIcon /> },
  { title: "Export Map", note: "Generate a Printable Map", icon: <PdfIcon /> },
  { title: "Measure", note: "Measure Area or Distance", icon: <MeasureIcon /> },
  { title: "Bookmarks", note: "Save Map Views", icon: <BookmarkIcon /> },
];

const columns = [
  { name: "Block", w: 170 },
  { name: "Lot", w: 136 },
  { name: "Municipality", w: 264 },
  { name: "Municipality Code", w: 347 },
  { name: "Property Location", w: 345 },
  { name: "GIS PIN", w: 323 },
  { name: "Acres", w: 173 },
];

const rows = [
  ["26", "78.02", "CHESTER TWP", "1407", "100 NORTH RD", "1407_26_78.02", "9.44"],
  ["26", "78.02", "CHESTER TWP", "1407", "100 NORTH RD", "1407_26_78.02_T01", "0.06"],
];

const AcresField = ({ label }: { label: string }) => (
  <Stepper>
    <StepInput type="number" placeholder={label} aria-label={label} />
    <StepButtons>
      <StepButton type="button" aria-label={`Increase ${label}`}><Chevron up /></StepButton>
      <StepButton type="button" aria-label={`Decrease ${label}`}><Chevron /></StepButton>
    </StepButtons>
  </Stepper>
);

const SidebarPanel = () => (
  <Sidebar>
    <Scroller>
      <ScrollBody>
        <SectionButton type="button" $open aria-expanded="true">
          <SearchIcon />
          <SectionText>
            <SectionTitle>Parcel Search</SectionTitle>
            <SectionNote $open>Search Tax Parcels</SectionNote>
          </SectionText>
          <Chevron up />
        </SectionButton>
        <SearchForm onSubmit={(e) => e.preventDefault()}>
          <SelectWrap>
            <SelectBox aria-label="Municipality" defaultValue="">
              <option value="">Select Municipality</option>
            </SelectBox>
            <SelectMark><Chevron /></SelectMark>
          </SelectWrap>
          <Pair>
            <TextBox placeholder="Enter Block" aria-label="Block" />
            <TextBox placeholder="Enter Lot" aria-label="Lot" />
          </Pair>
          <AppendLabel>
            <AppendBox type="checkbox" />
            Append to existing results
          </AppendLabel>
          <Advanced>
            <AdvancedToggle type="button" aria-expanded="true">
              Advanced Options
              <Chevron up />
            </AdvancedToggle>
            <TextBox defaultValue="100 north rd" aria-label="Property location" />
            <TextBox placeholder="Enter GIS Pin" aria-label="GIS Pin" />
            <TextBox placeholder="Enter Qualifier" aria-label="Qualifier" />
            <Pair>
              <AcresField label="Min Acres" />
              <AcresField label="Max Acres" />
            </Pair>
          </Advanced>
          <FormActions>
            <Button type="reset">Reset</Button>
            <SubmitButton type="submit" $solid>Search</SubmitButton>
          </FormActions>
        </SearchForm>
        {sections.map((s) => (
          <SectionButton key={s.title} type="button" aria-expanded="false">
            {s.icon}
            <SectionText>
              <SectionTitle>{s.title}</SectionTitle>
              <SectionNote>{s.note}</SectionNote>
            </SectionText>
            <Chevron />
          </SectionButton>
        ))}
        <ContactCard>
          <ContactTitle>NJ Highlands Council GIS Department</ContactTitle>
          <Address>
            100 North Rd. (Route 513)<br />
            Chester, NJ<br />
            (908) 879-6737
          </Address>
          <ContactLinks>
            <ContactLink href="#email">Email</ContactLink>
            <span>·</span>
            <ContactLink href="#website">Website</ContactLink>
            <span>·</span>
            <ContactLink href="#data">Open Data</ContactLink>
          </ContactLinks>
        </ContactCard>
      </ScrollBody>
      <ScrollTrack><ScrollThumb /></ScrollTrack>
    </Scroller>
    <Credit>Built by <a href="#carto">Carto Concepts, LLC</a></Credit>
  </Sidebar>
);

const MapPanel = () => (
  <MapPane>
    <MapArt />
    <ToolColumn>
      <ToolGroup>
        <ToolStack>
          <ToolButton type="button" aria-label="Zoom in"><Icon><path d="M16 7v18M7 16h18" /></Icon></ToolButton>
          <ToolButton type="button" aria-label="Zoom out"><Icon><path d="M6 16h20" /></Icon></ToolButton>
        </ToolStack>
        <ToolButton type="button" aria-label="Default extent"><HomeIcon /></ToolButton>
      </ToolGroup>
      <ToolButton type="button" aria-label="Compass"><CompassIcon /></ToolButton>
      <ToolButton type="button" aria-label="Full screen"><ExpandIcon /></ToolButton>
    </ToolColumn>
    <AddressSearch>
      <SearchIcon />
      <AddressInput placeholder="Search for Address..." aria-label="Search for Address" />
    </AddressSearch>
    <BasemapPicker>
      <BasemapSelect aria-label="Basemap">
        <option>NJ Highlands Basemap</option>
      </BasemapSelect>
      <BasemapMark><Chevron /></BasemapMark>
    </BasemapPicker>
    <CornerButton type="button" aria-label="Open overview"><ArrowIcon /></CornerButton>
    <ScaleBar>200 ft</ScaleBar>
    <Attribution>
      <span>NJ Highlands Council</span>
      <Powered>Powered by Esri</Powered>
    </Attribution>
    <SideFold type="button" aria-label="Collapse sidebar">
      <svg width="10" height="20" viewBox="0 0 10 20" aria-hidden="true"><path d="M10 0v20L0 10z" fill={navy} /></svg>
    </SideFold>
    <BottomFold type="button" aria-label="Collapse results">
      <svg width="20" height="10" viewBox="0 0 20 10" aria-hidden="true"><path d="M0 10h20L10 0z" fill={navy} /></svg>
    </BottomFold>
  </MapPane>
);

const ResultsPanel = () => (
  <Results>
    <ResultsBar>
      <Count>2 Parcels Found | <strong>2 of 2</strong> Selected</Count>
      <Actions>
        <Marked>
          <Button type="button" $solid>View Combined Report (2 parcels, 9.50 acres)<SheetIcon /></Button>
          <Mark $kind="wide" />
        </Marked>
        <Button type="button">Clear Selection<CloseIcon /></Button>
        <Button type="button">Export Selected to CSV<DownloadIcon /></Button>
        <SplitButton>
          <SplitMain type="button">Buffer Selected<BufferIcon /></SplitMain>
          <SplitMore type="button" aria-label="Buffer options"><Chevron /></SplitMore>
        </SplitButton>
      </Actions>
    </ResultsBar>
    <Table>
      <colgroup>
        <Column $w={67} />
        {columns.map((c) => <Column key={c.name} $w={c.w} />)}
        <Column />
      </colgroup>
      <thead>
        <tr>
          <HeadCell><TickBox type="checkbox" defaultChecked aria-label="Select all" /></HeadCell>
          {columns.map((c) => (
            <HeadCell key={c.name} scope="col">
              <HeadInner>
                {c.name}
                <SortButton type="button" aria-label={`Sort by ${c.name}`}><SortIcon /></SortButton>
              </HeadInner>
            </HeadCell>
          ))}
          <HeadCell scope="col">Report</HeadCell>
        </tr>
      </thead>
      <tbody>
        {rows.map((r, i) => (
          <Row key={r[5]}>
            <Cell><TickBox type="checkbox" defaultChecked aria-label={`Select ${r[5]}`} /></Cell>
            {r.map((v, j) => <Cell key={j}>{v}</Cell>)}
            <Cell>
              <Marked>
                <ReportButton type="button"><SheetIcon />View Report</ReportButton>
                {i === 0 && <Mark $kind="cell" />}
              </Marked>
            </Cell>
          </Row>
        ))}
      </tbody>
    </Table>
  </Results>
);

export default function App() {
  return (
    <>
      <Global />
      <Page>
        <Header>
          <Brand>
            <Seal />
            <Title>Highlands Resource Explorer</Title>
          </Brand>
          <HeaderNav>
            <NavButton type="button"><HelpIcon />Help<Dot /></NavButton>
            <NavButton type="button"><MenuIcon />Menu</NavButton>
          </HeaderNav>
        </Header>
        <Body>
          <SidebarPanel />
          <Main>
            <MapPanel />
            <ResultsPanel />
          </Main>
        </Body>
      </Page>
    </>
  );
}
